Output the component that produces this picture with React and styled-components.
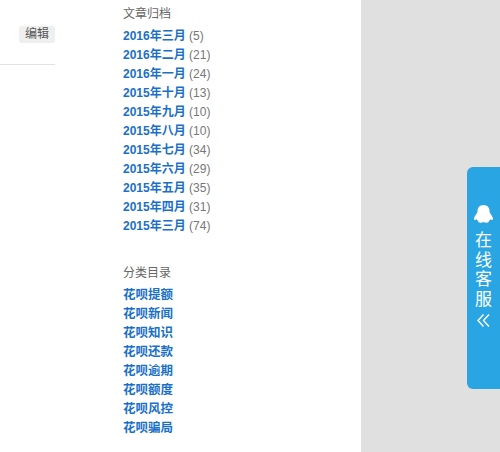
import React from "react";
import styled, { createGlobalStyle } from "styled-components";

const Global = createGlobalStyle`
  html, body { margin: 0; padding: 0; }
  body { font-family: "Liberation Sans", "Noto Sans CJK SC", sans-serif; font-size: 12px; overflow: hidden; }
`;
const Page = styled.div`
  position: relative;
  display: flex;
  width: 500px;
  height: 452px;
  background: #e0e0e0;
  overflow: hidden;
`;
const Content = styled.div`
  display: flex;
  width: 361px;
  height: 452px;
  background: #fff;
`;
const PostColumn = styled.div`
  width: 55px;
  margin-right: 68px;
  height: 65px;
  box-sizing: border-box;
  padding-top: 26px;
  border-bottom: 1px solid #e2e2e2;
  display: flex;
  justify-content: flex-end;
  align-items: flex-start;
`;
const EditButton = styled.span`
  width: 36px;
  height: 17px;
  line-height: 17px;
  text-align: center;
  background: #efefef;
  border-radius: 3px;
  color: #555;
  font-size: 12px;
`;
const Side = styled.div`
  display: flex;
  flex-direction: column;
  padding-top: 5px;
`;
const Section = styled.section`
  margin-bottom: ${(p) => p.$gap || 0}px;
`;
const Title = styled.h3`
  margin: 0 0 ${(p) => p.$gap}px;
  font-size: 12px;
  font-weight: normal;
  line-height: 19px;
  color: #666;
`;
const Row = styled.div`
  height: 19px;
  line-height: 19px;
  white-space: nowrap;
`;
const Link = styled.a`
  color: #1a70c8;
  font-weight: bold;
  font-size: ${(p) => p.$size || 12}px;
  text-decoration: none;
`;
const Count = styled.span`
  color: #777;
  font-size: 12px;
`;
const Tab = styled.div`
  position: absolute;
  left: 467px;
  top: 167px;
  width: 33px;
  height: 222px;
  box-sizing: border-box;
  padding-top: 38px;
  background: #29a5e3;
  border-radius: 6px 0 0 6px;
  box-shadow: -1px 0 0 #ecdcd4;
  display: flex;
  flex-direction: column;
  align-items: center;
  color: #fff;
`;
const TabText = styled.div`
  width: 17px;
  margin-top: 6px;
  font-size: 17px;
  line-height: 19.5px;
  text-align: center;
  font-family: "Noto Sans CJK SC", sans-serif;
`;
const Penguin = () => (
  <svg width="19" height="18" viewBox="0 0 19 18" fill="#fff">
    <path d="M9.500 0C5.500 0 3.500 2.800 3.500 6c0 1.300-.4 2-1.200 3C1.200 10.500 0 12.300 0 14c0 1.200 1 1.200 2.500.3.400.8 1 1.400 1.700 1.800-.3.900.7 1.700 2.300 1.700 1.300 0 2.300-.3 3-.7.700.4 1.700.7 3 .7 1.600 0 2.600-.8 2.300-1.700.7-.4 1.300-1 1.700-1.800 1.500.9 2.500.9 2.500-.3 0-1.700-1.200-3.500-2.300-5-.8-1-1.200-1.700-1.200-3C15.500 2.800 13.500 0 9.500 0z" />
  </svg>
);
const Chevrons = () => (
  <svg width="13" height="13" viewBox="0 0 13 13" fill="none" stroke="#fff" strokeWidth="1.400" style={{ marginTop: 7 }}>
    <path d="M6.500.500 1 6.500l5.500 6M12 .500 6.500 6.500l5.500 6" />
  </svg>
);

const archive = [
  ["2016年三月", 5], ["2016年二月", 21], ["2016年一月", 24], ["2015年十月", 13],
  ["2015年九月", 10], ["2015年八月", 10], ["2015年七月", 34], ["2015年六月", 29],
  ["2015年五月", 35], ["2015年四月", 31], ["2015年三月", 74],
];
const cats = ["花呗提额", "花呗新闻", "花呗知识", "花呗还款", "花呗逾期", "花呗额度", "花呗风控", "花呗骗局"];

export default function App() {
  return (
    <Page>
      <Global />
      <Content>
        <PostColumn><EditButton>编辑</EditButton></PostColumn>
        <Side>
          <Section $gap={28}>
            <Title $gap={3}>文章归档</Title>
            {archive.map(([m, c]) => (
              <Row key={m}><Link href="#">{m}</Link> <Count>({c})</Count></Row>
            ))}
          </Section>
          <Section>
            <Title $gap={3}>分类目录</Title>
            {cats.map((c) => (
              <Row key={c}><Link href="#" $size={12.5}>{c}</Link></Row>
            ))}
          </Section>
        </Side>
      </Content>
      <Tab>
        <Penguin />
        <TabText>在线客服</TabText>
        <Chevrons />
      </Tab>
    </Page>
  );
}
